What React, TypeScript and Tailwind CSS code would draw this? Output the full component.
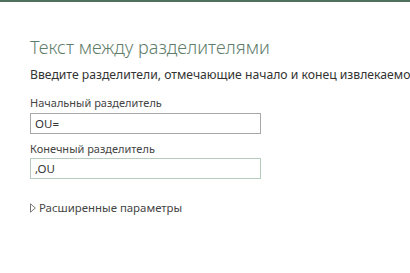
export default function App() {
  return (
    <div className="h-[273px] w-[410px] overflow-hidden bg-white font-['Noto_Sans',sans-serif]">
      <div className="h-[2px] bg-[#50705e]" />
      <div className="px-[30px] pt-[33px]">
        <h1 className="whitespace-nowrap text-[18px] font-light leading-[24px] text-[#5f7d6b]">
          Текст между разделителями
        </h1>
        <p className="mt-[8px] whitespace-nowrap text-[12.2px] leading-[16px] text-[#333]">
          Введите разделители, отмечающие начало и конец извлекаемого текста.
        </p>
        <div className="mt-[12px] flex flex-col">
          <label className="text-[11px] leading-[16px] text-[#444]">Начальный разделитель</label>
          <div className="mt-[2px] flex h-[21px] w-[231px] items-center border border-[#a8a8a8] px-[4px] text-[11.5px] text-[#333]">
            OU=
          </div>
          <label className="mt-[7px] text-[11px] leading-[16px] text-[#444]">Конечный разделитель</label>
          <div className="mt-[1px] flex h-[21px] w-[231px] items-center border border-[#b6ccbf] px-[4px] text-[11.5px] text-[#333]">
            ,OU
          </div>
        </div>
        <div className="mt-[21px] flex items-center gap-[3px] text-[11.4px] leading-[16px] text-[#444]">
          <svg width="6" height="10" viewBox="0 0 6 10" className="shrink-0">
            <path d="M0.5 0.8 L5.3 5 L0.5 9.2 Z" fill="none" stroke="#777" strokeWidth="1" />
          </svg>
          <span>Расширенные параметры</span>
        </div>
      </div>
    </div>
  );
}
